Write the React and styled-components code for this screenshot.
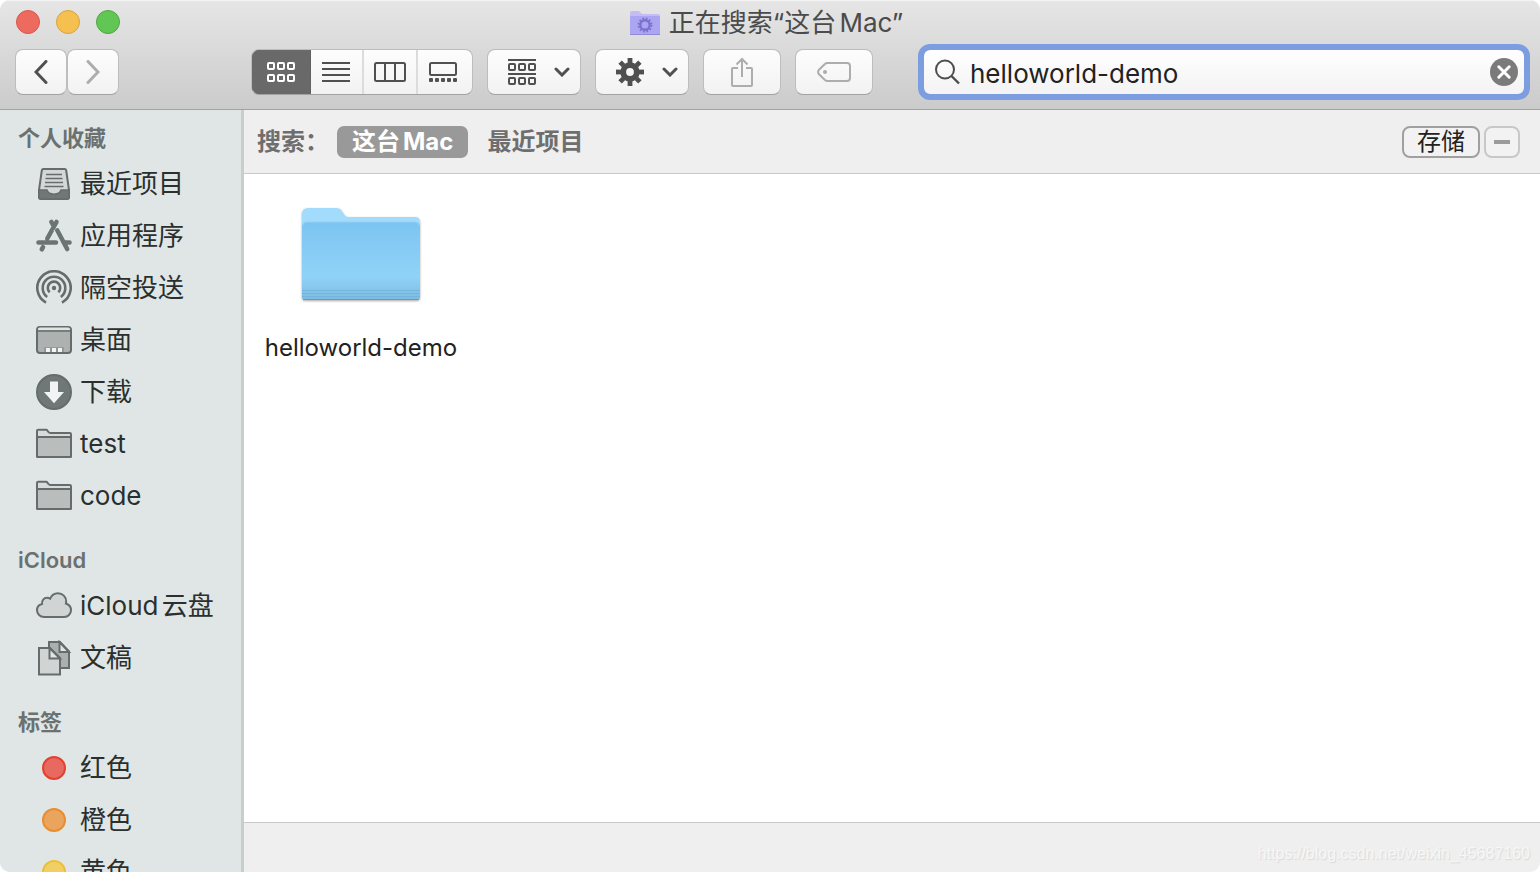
import React, { useState } from "react";
import styled, { createGlobalStyle, css } from "styled-components";

const GlobalStyle = createGlobalStyle`
  * {
    box-sizing: border-box;
  }
  body {
    margin: 0;
    background: #fff;
    font-family: Inter, "Noto Sans CJK SC", sans-serif;
    text-autospace: normal;
    -webkit-font-smoothing: antialiased;
  }
  button, input {
    font: inherit;
    color: inherit;
    margin: 0;
    padding: 0;
  }
  svg {
    display: block;
    flex: none;
  }
`;

const Window = styled.div`
  height: 100vh;
  display: flex;
  flex-direction: column;
  overflow: hidden;
  border-radius: 10px;
  background: #efefef;
`;

/* title bar and toolbar */

const Header = styled.header`
  flex: none;
  background: linear-gradient(#e6e6e6, #cbcbcb);
  border-bottom: 1px solid #a3a3a3;
  box-shadow: inset 0 1px 0 #f4f4f4;
  padding-bottom: 9px;
`;
const TitleBar = styled.div`
  display: grid;
  grid-template-columns: 1fr auto 1fr;
  align-items: center;
  height: 44px;
  padding: 0 24px 0 16px;
`;
const Lights = styled.div`
  display: flex;
  gap: 16px;
`;
const Light = styled.button`
  width: 24px;
  height: 24px;
  border-radius: 50%;
  border: 1px solid ${(props) => props.$edge};
  background: ${(props) => props.$fill};
`;
const Title = styled.h1`
  display: flex;
  align-items: center;
  gap: 8px;
  margin: 0;
  padding-top: 2px;
  font-size: 26px;
  line-height: 34px;
  font-weight: 400;
  color: #4b4b4b;
`;
const Toolbar = styled.div`
  display: flex;
  align-items: center;
  height: 56px;
  padding: 0 10px 0 15px;
`;
const NavButtons = styled.div`
  display: flex;
  margin-right: 132px;
`;
const raised = css`
  height: 46px;
  border: 1px solid #bdbdbd;
  border-bottom-color: #a2a2a2;
  border-radius: 8px;
  background: linear-gradient(#fdfdfd, #f2f2f2);
`;
const ToolButton = styled.button`
  ${raised}
  display: flex;
  align-items: center;
  justify-content: center;
  width: ${(props) => props.$width}px;
  color: ${(props) => (props.disabled ? "#adadad" : "#505050")};
`;
const MenuButton = styled(ToolButton)`
  gap: 18px;
  padding-left: 10px;
`;
const Tools = styled.div`
  display: flex;
  gap: 14px;
  margin-right: 45px;
`;
const Segments = styled.div`
  ${raised}
  display: flex;
  overflow: hidden;
`;
const Segment = styled.button`
  display: flex;
  align-items: center;
  justify-content: center;
  width: 54px;
  border: 0;
  border-left: 2px solid #dcdcdc;
  background: none;
  color: #505050;
  &:first-child {
    width: 58px;
    border-left: 0;
  }
  &:nth-child(2) {
    width: 52px;
    border-left: 0;
  }
  &:last-child {
    width: 56px;
    padding-right: 4px;
  }
  ${(props) =>
    props.$active &&
    css`
      background: #696969;
      color: #fff;
      box-shadow: 0 0 0 1px #616161;
    `}
`;
const SearchField = styled.label`
  flex: 1;
  display: flex;
  align-items: center;
  height: 56px;
  padding: 0 6px 0 10px;
  border: 6px solid #7c9ee0;
  border-radius: 12px;
  background: linear-gradient(#fff, #f3f3f3) padding-box;
  color: #4d4d4d;
`;
const SearchInput = styled.input`
  flex: 1;
  min-width: 0;
  height: 36px;
  margin-left: 10px;
  padding-top: 2px;
  border: 0;
  outline: 0;
  background: none;
  font-size: 26px;
  color: #222;
`;
const ClearButton = styled.button`
  border: 0;
  background: none;
  color: #7b7b7b;
`;

/* sidebar */

const Body = styled.div`
  flex: 1;
  min-height: 0;
  display: grid;
  grid-template-columns: 244px 1fr;
`;
const Sidebar = styled.nav`
  overflow: hidden;
  padding-top: 8px;
  background: #e0e6e5;
  border-right: 3px solid #c8cecd;
`;
const Section = styled.section`
  margin-bottom: 18px;
`;
const SectionTitle = styled.h2`
  margin: 0;
  padding-left: 18px;
  font-size: 22px;
  line-height: 40px;
  font-weight: 600;
  color: #6b7170;
`;
const Place = styled.a`
  display: flex;
  align-items: center;
  gap: 8px;
  height: 52px;
  padding-left: 36px;
  font-size: 26px;
  line-height: 36px;
  color: #2b2f2e;
  text-decoration: none;
  white-space: nowrap;
`;
const TagDot = styled.span`
  width: 24px;
  height: 24px;
  margin: 0 6px;
  border-radius: 50%;
  border: 2px solid ${(props) => props.$edge};
  background: ${(props) => props.$fill};
`;

/* results */

const Main = styled.main`
  display: flex;
  flex-direction: column;
  min-width: 0;
  background: #fff;
`;
const ScopeBar = styled.div`
  display: flex;
  align-items: center;
  gap: 4px;
  height: 64px;
  padding: 0 20px 0 13px;
  border-bottom: 1px solid #c9c9c9;
  background: #efefef;
  font-size: 24px;
  line-height: 32px;
  font-weight: 600;
  color: #6e6e6e;
`;
const ScopeLabel = styled.span`
  width: 76px;
`;
const Scope = styled.button`
  height: 32px;
  padding: 0 15px;
  border: 0;
  border-radius: 7px;
  background: ${(props) => (props.$active ? "#999" : "none")};
  color: ${(props) => (props.$active ? "#fff" : "#6e6e6e")};
  font-weight: ${(props) => (props.$active ? 700 : 600)};
`;
const ScopeActions = styled.div`
  display: flex;
  gap: 4px;
  margin-left: auto;
`;
const ScopeButton = styled.button`
  display: flex;
  align-items: center;
  justify-content: center;
  width: ${(props) => props.$width}px;
  height: 32px;
  border: 2px solid ${(props) => props.$edge};
  border-radius: 8px;
  background: #f2f2f2;
  font-weight: 400;
  color: #222;
`;
const Results = styled.div`
  flex: 1;
  min-height: 0;
  padding: 30px 17px;
`;
const ResultItem = styled.figure`
  display: flex;
  flex-direction: column;
  align-items: center;
  width: 200px;
  margin: 0;
`;
const ResultName = styled.figcaption`
  margin-top: 28px;
  font-size: 24px;
  line-height: 32px;
  color: #222;
`;
const StatusBar = styled.footer`
  display: flex;
  align-items: center;
  justify-content: flex-end;
  height: 50px;
  padding: 12px 10px 0 0;
  border-top: 1px solid #c9c9c9;
  background: #efefef;
  font-family: "Liberation Sans", sans-serif;
  font-size: 16px;
  color: #f7f7f7;
  text-shadow: 1px 1px 1px #d8d8d8;
`;

/* icons */

const Chevron = ({ flip }) => (
  <svg width="14" height="24" viewBox="0 0 14 24" fill="none" stroke="currentColor" strokeWidth="3" strokeLinecap="round">
    <path d={flip ? "M2 1.5 12 12 2 22.5" : "M12 1.5 2 12 12 22.5"} />
  </svg>
);

const ChevronDown = () => (
  <svg width="16" height="10" viewBox="0 0 16 10" fill="none" stroke="currentColor" strokeWidth="3" strokeLinecap="round">
    <path d="M2 2l6 6 6-6" />
  </svg>
);

const Squares = ({ y }) =>
  [1, 11, 21].map((x) => <rect key={x} x={x} y={y} width="6" height="6" rx="1" />);

const IconViewIcon = () => (
  <svg width="28" height="20" viewBox="0 0 28 20" fill="none" stroke="currentColor" strokeWidth="2">
    <Squares y={1} />
    <Squares y={13} />
  </svg>
);

const ListViewIcon = () => (
  <svg width="28" height="20" viewBox="0 0 28 20" stroke="currentColor" strokeWidth="2">
    <path d="M0 1h28M0 7h28M0 13h28M0 19h28" />
  </svg>
);

const ColumnViewIcon = () => (
  <svg width="32" height="20" viewBox="0 0 32 20" fill="none" stroke="currentColor" strokeWidth="2">
    <rect x="1" y="1" width="30" height="18" rx="1.5" />
    <path d="M11 1v18M21 1v18" />
  </svg>
);

const GalleryViewIcon = () => (
  <svg width="28" height="20" viewBox="0 0 28 20" fill="none" stroke="currentColor" strokeWidth="2">
    <rect x="1" y="1" width="26" height="12" rx="1.5" />
    {[0, 6, 12, 18, 24].map((x) => (
      <rect key={x} x={x} y="16" width="4" height="4" rx="1" fill="currentColor" stroke="none" />
    ))}
  </svg>
);

const ArrangeIcon = () => (
  <svg width="28" height="26" viewBox="0 0 28 26" fill="none" stroke="currentColor" strokeWidth="2">
    <path d="M0 1h28M0 15h28" />
    <Squares y={5} />
    <Squares y={19} />
  </svg>
);

const GearIcon = () => (
  <svg width="28" height="28" viewBox="0 0 28 28" fill="none" stroke="currentColor">
    <circle cx="14" cy="14" r="6.800" strokeWidth="5.800" />
    {[0, 45, 90, 135, 180, 225, 270, 315].map((angle) => (
      <path key={angle} d="M14 0v5" strokeWidth="4.800" transform={`rotate(${angle} 14 14)`} />
    ))}
  </svg>
);

const ShareIcon = () => (
  <svg width="22" height="30" viewBox="0 0 22 30" fill="none" stroke="currentColor" strokeWidth="2">
    <path d="M7 11H2a1 1 0 0 0-1 1v16a1 1 0 0 0 1 1h18a1 1 0 0 0 1-1V12a1 1 0 0 0-1-1h-5" />
    <path d="M11 20V2M5.500 7.500 11 2l5.500 5.500" />
  </svg>
);

const TagIcon = () => (
  <svg width="34" height="20" viewBox="0 0 34 20" fill="none" stroke="currentColor" strokeWidth="2">
    <path d="M10.500 1H30a3 3 0 0 1 3 3v12a3 3 0 0 1-3 3H10.500a4 4 0 0 1-2.600-1L1.800 12q-1.400-2 0-4L7.900 2a4 4 0 0 1 2.600-1z" />
    <circle cx="8" cy="10" r="2" fill="currentColor" stroke="none" />
  </svg>
);

const MagnifierIcon = () => (
  <svg width="26" height="26" viewBox="0 0 26 26" fill="none" stroke="currentColor" strokeWidth="2">
    <circle cx="11" cy="10.500" r="9" />
    <path d="M17.500 17l7.500 7.500" strokeWidth="2.400" />
  </svg>
);

const ClearIcon = () => (
  <svg width="28" height="28" viewBox="0 0 28 28">
    <circle cx="14" cy="14" r="14" fill="currentColor" />
    <path d="M8.800 8.800l10.400 10.400M19.200 8.800L8.800 19.200" stroke="#fff" strokeWidth="3" strokeLinecap="round" />
  </svg>
);

const SmartFolderIcon = () => (
  <svg width="32" height="26" viewBox="0 0 32 26">
    <path d="M1 3a2 2 0 0 1 2-2h7l3 3h16a2 2 0 0 1 2 2v18a1 1 0 0 1-1 1H2a1 1 0 0 1-1-1z" fill="#c3bdf3" />
    <path d="M1 6h30v18a1 1 0 0 1-1 1H2a1 1 0 0 1-1-1z" fill="#aca5f2" />
    <path d="M1 24.500h30" stroke="#918ad4" />
    <circle cx="16" cy="15" r="4.700" fill="none" stroke="#7b72cf" strokeWidth="2.400" />
    <circle cx="16" cy="15" r="6.500" fill="none" stroke="#7b72cf" strokeWidth="2" strokeDasharray="1.700 1.700" />
  </svg>
);

const PlaceSvg = ({ children }) => (
  <svg width="36" height="36" viewBox="0 0 36 36" fill="none" stroke="#656c6b" strokeWidth="2">
    {children}
  </svg>
);

const RecentsIcon = () => (
  <PlaceSvg>
    <path d="M7.500 3h21q1.500 0 1.700 1.500L33 24v7q0 2-2 2H5q-2 0-2-2v-7L5.800 4.500Q6 3 7.500 3z" fill="#d3d8d7" />
    <path d="M3 24h8c1.500 5.500 12.500 5.500 14 0h8v7q0 2-2 2H5q-2 0-2-2z" fill="#707877" strokeWidth="1.500" />
    <path d="M10 8.500h16M9.500 12.500h17M9 16.500h18M8.500 20.500h19" strokeWidth="1.700" />
  </PlaceSvg>
);

const AppsIcon = () => (
  <PlaceSvg>
    <g stroke="#6c7473" strokeWidth="4.600" strokeLinecap="round">
      <path d="M20.500 4 11.300 20.500M7 29.200 5.800 31.300M2.500 24.500H20M28.500 24.500h5M15.400 4l1.400 2.500" />
      <path d="M21.300 12.500 31.200 31" />
    </g>
    <path d="M19.300 10.500 25.500 22" stroke="#e0e6e5" strokeWidth="1" transform="translate(-1.500 1.500)" />
  </PlaceSvg>
);

const AirDropIcon = () => (
  <PlaceSvg>
    <g strokeWidth="2.600">
      <path d="M10 32.600a16.700 16.700 0 1 1 16 0" />
      <path d="M11.200 27a11.300 11.300 0 1 1 13.600 0" />
      <path d="M13.700 22.300a6.200 6.200 0 1 1 8.600 0" />
    </g>
    <circle cx="18" cy="18" r="2.200" fill="#656c6b" stroke="none" />
  </PlaceSvg>
);

const DesktopIcon = () => (
  <PlaceSvg>
    <rect x="1" y="5" width="34" height="26" rx="3" fill="#adb2b1" />
    <path d="M2 8V7q0-1.500 2-1.500h28q2 0 2 1.500v1z" fill="#dfe5e4" stroke="none" />
    <path d="M1 9h34" strokeWidth="1.600" />
    <path d="M9 30v-4h18v4" fill="#8f9594" stroke="#8f9594" strokeWidth="1.500" />
    <path d="M10 26h4v4h-4zM16 26h4v4h-4zM22 26h4v4h-4z" fill="#f0f4f3" stroke="none" />
  </PlaceSvg>
);

const DownloadsIcon = () => (
  <PlaceSvg>
    <circle cx="18" cy="18" r="17" fill="#707877" />
    <path d="M14 7.500h8V18h6L18 29.200 8 18h6z" fill="#f0f4f3" stroke="none" />
  </PlaceSvg>
);

const FolderIcon = () => (
  <PlaceSvg>
    <path d="M1 31V5q0-1.200 1.200-1.200H10q1 0 1.600 1l1 1.200q.6 1 1.700 1h19.500Q35 7 35 8.200V30q0 1-1 1H2q-1 0-1-1z" fill="#d7dcdb" />
    <path d="M1 30.500V12.500q0-1.500 1.500-1.500h31q1.500 0 1.500 1.500v18q0 .5-1 .5H2q-1 0-1-.5z" fill="#b9bebd" />
  </PlaceSvg>
);

const CloudIcon = () => (
  <PlaceSvg>
    <path
      d="M8 29C4 29 1 26 1 22.300c0-3 2-5.600 5-6.300-.5-3.500 2-6.300 5-6.300 1.200 0 2.300.4 3.100 1C15.400 7.500 18.400 5.200 22 5.200c4.600 0 8.200 3.700 8.200 8.300 0 .7-.1 1.400-.3 2C33 16.500 35 19 35 22.300 35 26 32 29 28.200 29z"
      fill="#d0d5d4"
    />
  </PlaceSvg>
);

const DocumentsIcon = () => (
  <PlaceSvg>
    <path d="M13 2h11l9 9.500V28H13z" fill="#abb0af" />
    <path d="M23.500 2v10H33z" fill="#dfe5e4" />
    <path d="M3 8h11l10 10v16.500H3z" fill="#d0d5d4" />
    <path d="M13.500 8v10.500H24z" fill="#dfe5e4" />
  </PlaceSvg>
);

const LargeFolder = () => (
  <svg width="124" height="100" viewBox="0 0 124 100">
    <defs>
      <linearGradient id="folderFront" x1="0" y1="0" x2="0" y2="1">
        <stop offset="0" stopColor="#7cc4f1" />
        <stop offset=".7" stopColor="#90d3f8" />
        <stop offset=".86" stopColor="#86c6ec" />
        <stop offset="1" stopColor="#7cbbe1" />
      </linearGradient>
      <filter id="folderShadow" x="-5%" y="-5%" width="110%" height="112%">
        <feDropShadow dx="0" dy="1" stdDeviation="1" floodColor="#000" floodOpacity=".35" />
      </filter>
    </defs>
    <path
      filter="url(#folderShadow)"
      d="M3 10q0-6 6-6h28q4 0 6 3l2.500 4q1.500 2 4 2H116q5 0 5 5v75q0 3-3 3H6q-3 0-3-3z"
      fill="#a3dbfc"
    />
    <path d="M3 23q0-5 5-5h108q5 0 5 5v70q0 3-3 3H6q-3 0-3-3z" fill="url(#folderFront)" />
    <path d="M3.500 22q.5-4 5-4h107q4.500 0 5 4" fill="none" stroke="#93cff4" />
    <path d="M3 86.500h118M3 89.500h118M3 92.500h118" stroke="#74b5de" />
    <path d="M4 95.500h116" stroke="#5d9dc7" />
  </svg>
);

const lights = [
  { name: "Close", fill: "#ed6a5e", edge: "#d8584d" },
  { name: "Minimize", fill: "#f5c04f", edge: "#d9a33f" },
  { name: "Zoom", fill: "#61c654", edge: "#4fa73f" },
];

const views = [
  { name: "Icons", Icon: IconViewIcon },
  { name: "List", Icon: ListViewIcon },
  { name: "Columns", Icon: ColumnViewIcon },
  { name: "Gallery", Icon: GalleryViewIcon },
];

const sections = [
  {
    title: "个人收藏",
    places: [
      { name: "最近项目", Icon: RecentsIcon },
      { name: "应用程序", Icon: AppsIcon },
      { name: "隔空投送", Icon: AirDropIcon },
      { name: "桌面", Icon: DesktopIcon },
      { name: "下载", Icon: DownloadsIcon },
      { name: "test", Icon: FolderIcon },
      { name: "code", Icon: FolderIcon },
    ],
  },
  {
    title: "iCloud",
    places: [
      { name: "iCloud云盘", Icon: CloudIcon },
      { name: "文稿", Icon: DocumentsIcon },
    ],
  },
  {
    title: "标签",
    places: [
      { name: "红色", fill: "#e8695f", edge: "#e2412f" },
      { name: "橙色", fill: "#eba45d", edge: "#e88e2e" },
      { name: "黄色", fill: "#f0cf65", edge: "#ecc037" },
    ],
  },
];

const scopes = ["这台Mac", "最近项目"];

function App() {
  const [query, setQuery] = useState("helloworld-demo");
  const [view, setView] = useState("Icons");
  const [scope, setScope] = useState(scopes[0]);

  return (
    <Window>
      <GlobalStyle />
      <Header>
        <TitleBar>
          <Lights>
            {lights.map((light) => (
              <Light key={light.name} aria-label={light.name} $fill={light.fill} $edge={light.edge} />
            ))}
          </Lights>
          <Title>
            <SmartFolderIcon />
            <span>正在搜索“这台Mac”</span>
          </Title>
        </TitleBar>
        <Toolbar>
          <NavButtons>
            <ToolButton $width={52} aria-label="Back">
              <Chevron />
            </ToolButton>
            <ToolButton $width={52} aria-label="Forward" disabled>
              <Chevron flip />
            </ToolButton>
          </NavButtons>
          <Tools>
            <Segments>
              {views.map(({ name, Icon }) => (
                <Segment key={name} aria-label={name} $active={view === name} onClick={() => setView(name)}>
                  <Icon />
                </Segment>
              ))}
            </Segments>
            <MenuButton $width={94} aria-label="Group">
              <ArrangeIcon />
              <ChevronDown />
            </MenuButton>
            <MenuButton $width={94} aria-label="Action">
              <GearIcon />
              <ChevronDown />
            </MenuButton>
            <ToolButton $width={78} aria-label="Share" disabled>
              <ShareIcon />
            </ToolButton>
            <ToolButton $width={78} aria-label="Tags" disabled>
              <TagIcon />
            </ToolButton>
          </Tools>
          <SearchField>
            <MagnifierIcon />
            <SearchInput
              aria-label="Search"
              spellCheck={false}
              value={query}
              onChange={(e) => setQuery(e.target.value)}
            />
            <ClearButton aria-label="Clear" onClick={() => setQuery("")}>
              <ClearIcon />
            </ClearButton>
          </SearchField>
        </Toolbar>
      </Header>
      <Body>
        <Sidebar>
          {sections.map((section) => (
            <Section key={section.title}>
              <SectionTitle>{section.title}</SectionTitle>
              {section.places.map(({ name, Icon, fill, edge }) => (
                <Place key={name} href="#">
                  {Icon ? <Icon /> : <TagDot $fill={fill} $edge={edge} />}
                  <span>{name}</span>
                </Place>
              ))}
            </Section>
          ))}
        </Sidebar>
        <Main>
          <ScopeBar>
            <ScopeLabel>搜索：</ScopeLabel>
            {scopes.map((name) => (
              <Scope key={name} $active={scope === name} onClick={() => setScope(name)}>
                {name}
              </Scope>
            ))}
            <ScopeActions>
              <ScopeButton $width={78} $edge="#a0a0a0">
                存储
              </ScopeButton>
              <ScopeButton $width={36} $edge="#c8c8c8" aria-label="Remove">
                <svg width="16" height="4" viewBox="0 0 16 4">
                  <path d="M0 2h16" stroke="#9b9b9b" strokeWidth="4" />
                </svg>
              </ScopeButton>
            </ScopeActions>
          </ScopeBar>
          <Results>
            <ResultItem>
              <LargeFolder />
              <ResultName>helloworld-demo</ResultName>
            </ResultItem>
          </Results>
          <StatusBar>https://blog.csdn.net/weixin_45687160</StatusBar>
        </Main>
      </Body>
    </Window>
  );
}

export default App;
